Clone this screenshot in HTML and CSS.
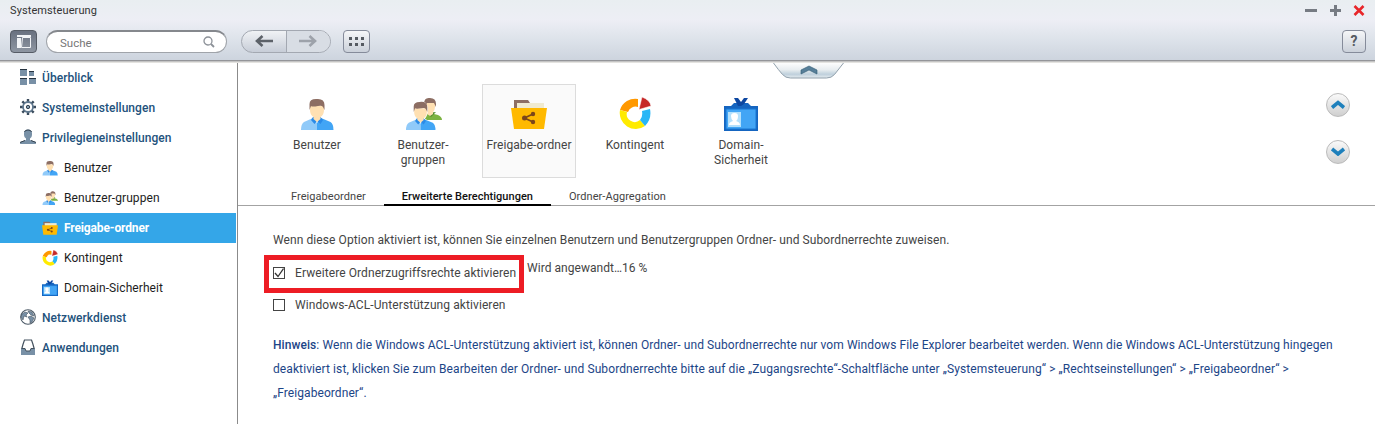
FILE: index.html
```html
<!DOCTYPE html>
<html lang="de">
<head>
<meta charset="utf-8">
<title>Systemsteuerung</title>
<link rel="stylesheet" href="styles.css">
</head>
<body>
<svg class="sprites" aria-hidden="true">
  <symbol id="user" viewBox="0 0 34 32">
    <path fill="#fff" stroke="#fff" stroke-width="2" d="M9 7Q9 1 16 1T24 7V12Q23 18 20 20L31 25Q34 28 33 32H1Q0 28 3 25L13 20Q10 18 9 12Z"/>
    <path fill="#90caf9" d="M1 32Q1 26 4 24L13 20L17 25V32Z"/>
    <path fill="#42a5f5" d="M33.500 32Q33.500 26 30.500 24L21 20L17 25V32Z"/>
    <path fill="#2b8be8" d="M13 19L11 22L14.500 26L17 23L20.500 26L23 22L20.500 19Z"/>
    <path fill="#ffe0b2" d="M10 8H24V12Q24 17 20.500 19V21L17 24L13.500 21V19Q10 17 10 12Z"/>
    <path fill="#8d6e63" d="M9.500 12V6Q9.500 1 16 1Q24.500 0 24.500 7V12L23 9Q22 7 18 8Q12 9 11 8Z"/>
  </symbol>
  <symbol id="group" viewBox="0 0 37 33">
    <path fill="#7cb342" d="M20 23V18L25 16L33 18Q37 20 37 23Z"/>
    <path fill="#558b2f" d="M22 16L26 20L31 15Z"/>
    <path fill="#ffe0b2" d="M20 5H30V10Q30 13 28 15V17L25 19L22 17Z"/>
    <path fill="#8d6e63" d="M19 7Q19 0 25 1Q31 1 31 7V10L29 6L22 6L20 11Z"/>
    <svg y="4" width="31" height="29"><use href="#user"/></svg>
  </symbol>
  <symbol id="folder" viewBox="0 0 36 30">
    <path fill="#8d6e63" d="M3 1H17L19 4V13H3Z"/>
    <path fill="#f0ead0" d="M6 4H33V13H6Z"/>
    <path fill="#ffb900" d="M0 9H36L33 30H3Z"/>
    <path fill="none" stroke="#7b461b" stroke-width="1.700" d="M22 15L13.500 19L22 23"/>
    <g fill="#7b461b"><circle cx="13.500" cy="19" r="2.500"/><circle cx="22" cy="15" r="2.200"/><circle cx="22" cy="23" r="2.200"/></g>
  </symbol>
  <symbol id="quota" viewBox="0 0 32 33">
    <path fill="#ff9800" d="M1 13A16 16 0 0 1 19 2V10A8 8 0 0 0 9 15Z"/>
    <path fill="#ffeb00" d="M1 13A16 16 0 0 0 26 29L21 23A8 8 0 0 1 8 15Z"/>
    <path fill="#29b6f6" d="M26 29Q33 22 31 12L23 14Q24 20 21 23Z"/>
    <path fill="#c62828" stroke="#fff" stroke-width=".5" d="M23 0Q31 3 32 9L20 12.500Z"/>
  </symbol>
  <symbol id="badge" viewBox="0 0 34 34">
    <path fill="#1565c0" d="M7 9L10 6H24L27 9H34V34H0V9Z"/>
    <path fill="#0d47a1" d="M10 1H14L17 5L20 1H24L20 7L17 9H14Z"/>
    <path fill="#42a5f5" stroke="#1976d2" stroke-width="1" d="M2 12H32V32H2Z"/>
    <path fill="#b3e0fc" d="M4 15H17V30H4Z"/>
    <path fill="#fff" d="M7 19Q7 16 10.500 16T14 19Q14 23 12 24Q16 25 16 28H5Q5 25 9 24Q7 22 7 19Z"/>
  </symbol>
</svg>

<header class="titlebar">
  <div class="caption">
    <span class="caption-text">Systemsteuerung</span>
    <svg class="window-buttons" width="62" height="13" viewBox="0 0 62 13"><path fill="none" stroke="#767b83" stroke-width="3" d="M0 6.500H12M25 6.500H36M30.500 1V12"/><path fill="none" stroke="#e8262a" stroke-width="2.600" d="M49.500 2L58.500 11M58.500 2L49.500 11"/></svg>
  </div>
  <div class="toolbar">
    <button class="layout-button" aria-label="Layout"><svg width="14" height="14"><path fill="#f2f4f7" d="M0 0H14V2H0ZM0 3H4V13H0Z"/><path fill="none" stroke="#f2f4f7" d="M5.500 2.500H13.500V12.500H4.500Z"/></svg></button>
    <div class="search"><span>Suche</span><svg width="12" height="12"><circle cx="5" cy="5" r="4" fill="none" stroke="#8c9198" stroke-width="1.300"/><path stroke="#8c9198" stroke-width="1.800" d="M8 8L11 11"/></svg></div>
    <div class="history">
      <span class="back"><svg width="20" height="12"><path fill="none" stroke="#5d6269" stroke-width="2.600" d="M19 6H3M8.500 1L3 6L8.500 11"/></svg></span>
      <span class="forward"><svg width="20" height="12"><path fill="none" stroke="#9da2aa" stroke-width="2.600" d="M1 6H17M11.500 1L17 6L11.500 11"/></svg></span>
    </div>
    <button class="square" aria-label="Apps"><svg width="15" height="9"><path fill="#555a61" d="M0 0H3V3H0ZM6 0H9V3H6ZM12 0H15V3H12ZM0 6H3V9H0ZM6 6H9V9H6ZM12 6H15V9H12Z"/></svg></button>
    <button class="square help">?</button>
  </div>
</header>

<div class="workspace">
  <nav class="sidebar">
    <a class="entry top"><svg width="16" height="16"><path fill="#7890a6" d="M0 0H7V7H0ZM9 2H14V7H9ZM0 9H7V16H0ZM9 9H16V15H9Z"/><path stroke="#263340" d="M0 .5H7M9 2.500H14M0 9.500H7M9 9.500H16"/></svg><span>Überblick</span></a>
    <a class="entry top"><svg width="16" height="16"><path stroke="#3a4b5c" stroke-width="2.400" d="M8 0V3M8 13V16M0 8H3M13 8H16M2.300 2.300L4.500 4.500M11.500 11.500L13.700 13.700M13.700 2.300L11.500 4.500M4.500 11.500L2.300 13.700"/><circle cx="8" cy="8" r="5" fill="#fff" stroke="#60788e" stroke-width="1.800"/><circle cx="8" cy="8" r="1.700" fill="#8299ad" stroke="#34424f"/></svg><span>Systemeinstellungen</span></a>
    <a class="entry top"><svg width="16" height="16"><path fill="#7890a6" d="M4 4Q4 .5 8 .5T12 4V6Q12 8 10 9.500V11L15 12.500Q16 13 16 15H0Q0 13 1 12.500L6 11V9.500Q4 8 4 6Z"/><path fill="none" stroke="#34424f" d="M4.500 3Q5 1 8 1T11.500 3M0 13.500L5 11.500M16 13.500L11 11.500"/></svg><span>Privilegieneinstellungen</span></a>
    <a class="entry sub"><svg width="16" height="16"><use href="#user"/></svg><span>Benutzer</span></a>
    <a class="entry sub"><svg width="16" height="16"><use href="#group"/></svg><span>Benutzer-gruppen</span></a>
    <a class="entry sub current"><svg width="16" height="16"><use href="#folder"/></svg><span>Freigabe-ordner</span></a>
    <a class="entry sub"><svg width="16" height="16"><use href="#quota"/></svg><span>Kontingent</span></a>
    <a class="entry sub"><svg width="16" height="16"><use href="#badge"/></svg><span>Domain-Sicherheit</span></a>
    <a class="entry top"><svg width="16" height="16"><circle cx="8" cy="8" r="7.300" fill="#fff" stroke="#4b5966" stroke-width="1.100"/><path fill="#7890a6" stroke="#45535f" stroke-width=".6" d="M2 5L5 3L8 4L6 6L7 8L4 7L3 11L1 8ZM8 2L12 3L14 7L11 6L9 4ZM8 8L11 7L14 9L12 13L10 14L10 11Z"/></svg><span>Netzwerkdienst</span></a>
    <a class="entry top"><svg width="16" height="16"><path fill="#fff" stroke="#43515e" stroke-width="1.200" d="M4.500 1H11.500Q13 5 14 9V15H2V9Q3 5 4.500 1Z"/><path fill="#7890a6" d="M1 9H5L6 12H10L11 9H15V16H1Z"/><path fill="none" stroke="#43515e" d="M1.500 9.500H5L6 12H10L11 9.500H14.500"/></svg><span>Anwendungen</span></a>
  </nav>

  <main class="panel">
    <svg class="collapse" width="72" height="18"><defs><linearGradient id="tab-fill" x2="0" y2="1"><stop stop-color="#fdfdfd"/><stop offset=".45" stop-color="#e8edf0"/><stop offset=".75" stop-color="#bfd0dc"/><stop offset="1" stop-color="#e5ecef"/></linearGradient></defs><path fill="url(#tab-fill)" stroke="#91a0ac" d="M.5 0Q5.500 7 9.500 11.500Q12.500 15 17.500 15H53.500Q58.500 15 61.500 11.500L70.500 0"/><path fill="#577f99" stroke="#315a74" stroke-width=".6" d="M28 7L36 3L44 7V11L36 7L28 11Z"/></svg>
    <section class="launcher">
      <a class="tile"><svg class="drop-1" width="34" height="32"><use href="#user"/></svg><span>Benutzer</span></a>
      <a class="tile"><svg width="37" height="33"><use href="#group"/></svg><span>Benutzer-<br>gruppen</span></a>
      <a class="tile selected"><svg class="drop-2" width="36" height="30"><use href="#folder"/></svg><span>Freigabe-ordner</span></a>
      <a class="tile"><svg width="32" height="33"><use href="#quota"/></svg><span>Kontingent</span></a>
      <a class="tile"><svg width="34" height="34"><use href="#badge"/></svg><span>Domain-<br>Sicherheit</span></a>
      <div class="pager">
        <span class="round"><svg width="14" height="9"><path fill="none" stroke="#1e80bc" stroke-width="3.600" d="M1 7.500L7 2.500L13 7.500"/></svg></span>
        <span class="round"><svg width="14" height="9"><path fill="none" stroke="#1e80bc" stroke-width="3.600" d="M1 2L7 7L13 2"/></svg></span>
      </div>
    </section>
    <div class="tabs">
      <a class="tab tab-first"><span>Freigabeordner</span></a>
      <a class="tab tab-active"><span>Erweiterte Berechtigungen</span></a>
      <a class="tab"><span>Ordner-Aggregation</span></a>
    </div>
    <section class="settings">
      <p class="intro">Wenn diese Option aktiviert ist, können Sie einzelnen Benutzern und Benutzergruppen Ordner- und Subordnerrechte zuweisen.</p>
      <div class="option-line">
        <div class="highlight"><span class="check"><svg width="10" height="10"><path fill="none" stroke="#333" stroke-width="1.300" d="M1 5L4 8.500L9.500 .5"/></svg></span><span>Erweitere Ordnerzugriffsrechte aktivieren</span></div>
        <span class="progress">Wird angewandt…16 %</span>
      </div>
      <div class="option"><span class="check"></span><span>Windows-ACL-Unterstützung aktivieren</span></div>
      <div class="note">
        <div><b>Hinweis</b>: Wenn die Windows ACL-Unterstützung aktiviert ist, können Ordner- und Subordnerrechte nur vom Windows File Explorer bearbeitet werden. Wenn die Windows ACL-Unterstützung hingegen</div>
        <div class="note-middle">deaktiviert ist, klicken Sie zum Bearbeiten der Ordner- und Subordnerrechte bitte auf die „Zugangsrechte“-Schaltfläche unter „Systemsteuerung“ &gt; „Rechtseinstellungen“ &gt; „Freigabeordner“ &gt;</div>
        <div>„Freigabeordner“.</div>
      </div>
    </section>
  </main>
</div>
</body>
</html>
```
FILE: styles.css
```css
* { box-sizing: border-box; }
body {
  margin: 0;
  width: 1375px;
  height: 424px;
  overflow: hidden;
  background: #fff;
  color: #444;
  font: 12px/15px Roboto, "Liberation Sans", sans-serif;
}
svg { display: block; flex: none; }
.sprites { position: absolute; width: 0; height: 0; }
button { padding: 0; font-family: inherit; }
span, p, .note div { white-space: nowrap; }

.titlebar {
  height: 63px;
  border-bottom: 1px solid #e4e3e0;
  box-shadow: inset 0 -1px #c4c4c4, inset 0 -2px #949599;
  background: linear-gradient(#e9eef1, #edeef5 20px, #e0e5ec 36px, #cdd4de 60px);
}
.caption { display: flex; justify-content: space-between; height: 21px; padding: 3px 8px 0 10px; }
.caption-text { font-size: 11px; letter-spacing: .1px; color: #333; }
.window-buttons { margin-top: 1px; }
.toolbar { display: flex; align-items: center; height: 41px; padding: 0 9px 0 10px; }
.layout-button {
  display: flex; align-items: center; justify-content: center;
  width: 27px; height: 23px;
  border: 1px solid #565c66; border-radius: 4px;
  background: linear-gradient(#697180, #8e96a2);
}
.search {
  display: flex; align-items: center; justify-content: space-between;
  width: 181px; height: 23px; margin-left: 9px; padding: 2px 11px 0 13px;
  border: 1px solid #a0a4aa; border-top: 2px solid #85888d; border-radius: 12px;
  background: #fff; color: #777; font-size: 11.500px;
}
.search svg { margin-bottom: 3px; }
.history {
  display: flex; width: 90px; height: 23px; margin-left: 14px;
  border: 1px solid #a3a8b1; border-radius: 12px;
  background: linear-gradient(#f0f2f5, #c7cdd7);
}
.back, .forward { display: flex; flex: 1; align-items: center; justify-content: center; }
.back { border-right: 1px solid #a3a8b1; }
.back svg, .forward svg { margin-bottom: 1px; }
.forward { border-radius: 0 12px 12px 0; background: #d8dde4; }
.square {
  display: flex; align-items: center; justify-content: center;
  width: 27px; height: 23px; margin-left: 12px;
  border: 1px solid #858b9a; border-radius: 4px;
  background: linear-gradient(#f5f6f8, #cbd1da);
}
.help { width: 24px; margin-left: auto; padding-bottom: 2px; color: #555a61; font: bold 14px/20px Roboto, sans-serif; }

.workspace { display: flex; height: 361px; }
.sidebar { width: 238px; border-right: 1px solid #8b8b8b; letter-spacing: .07px; }
.entry { display: flex; align-items: center; height: 30px; width: 236px; gap: 6px; padding-left: 20px; color: #1d1d1d; }
.top { color: #23527c; font-weight: 500; letter-spacing: .04px; }
.top svg { margin-bottom: 2px; }
.sub { padding-left: 42px; }
.current { background: #34a6e8; color: #fff; font-weight: 700; letter-spacing: -.13px; }

.panel { position: relative; flex: 1; letter-spacing: .084px; }
.collapse { position: absolute; left: 535px; top: 0; }
.launcher { display: flex; height: 124px; gap: 12px; padding: 21px 25px 0 32px; letter-spacing: .07px; }
.tile {
  display: flex; flex-direction: column; align-items: center;
  width: 94px; height: 94px; padding-top: 12px; border: 1px solid transparent; text-align: center;
}
.tile span { height: 32px; margin: auto 0 7px; }
.drop-1 { margin-top: 1px; }
.drop-2 { margin-top: 2px; }
.selected { border-color: #dcdcdc; background: #fafafa; }
.pager { display: flex; flex-direction: column; gap: 23px; margin: 9px 0 0 auto; }
.round {
  display: flex; align-items: center; justify-content: center;
  width: 24px; height: 24px; border: 1px solid #bbb; border-radius: 50%;
  background: linear-gradient(#fafafa, #cfcfcf);
}
.round svg { margin-bottom: 1px; }
.tabs { display: flex; height: 19px; padding-left: 35px; border-bottom: 1px solid #a3a3a3; font-size: 11px; letter-spacing: .06px; }
.tab { height: 19px; padding: 2px 18px 0; }
.tab-active { color: #111; font-weight: 500; letter-spacing: .02px; border-bottom: 2px solid #000; }

.settings { padding-left: 35px; color: #444; }
.intro { margin: 27px 0 0; }
.option-line { display: flex; margin: 7px 0 0 -9px; gap: 3px; }
.highlight { display: flex; align-items: center; width: 260px; height: 38px; padding: 0 0 2px 4px; border: 5px solid #ed1c24; }
.progress { margin-top: 6px; letter-spacing: .04px; }
.option { display: flex; align-items: center; height: 24px; }
.check { display: block; width: 12px; height: 12px; margin-right: 10px; border: 1px solid #444; background: #fff; }
.note { margin-top: 16px; color: #1c4587; line-height: 24px; letter-spacing: .077px; }
.note-middle { letter-spacing: .095px; }
.note b { font-weight: 500; }
```
